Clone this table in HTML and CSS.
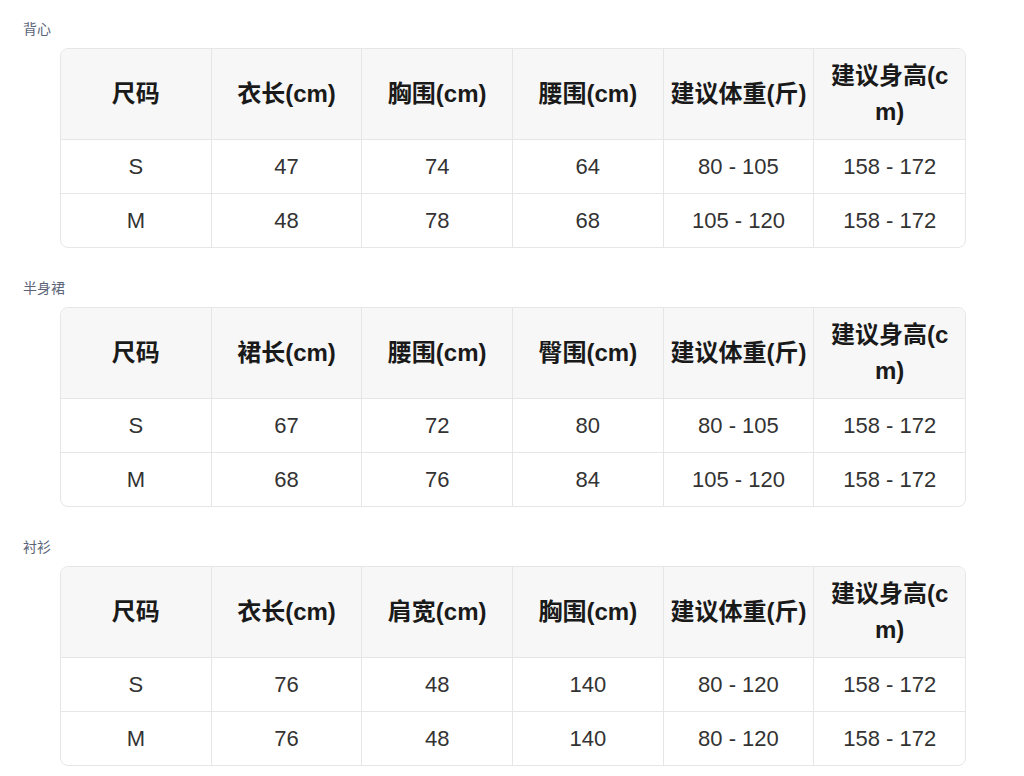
FILE: index.html
```html
<!DOCTYPE html>
<html lang="zh-CN">
<head>
<meta charset="utf-8">
<title>尺码表</title>
<link rel="stylesheet" href="styles.css">
</head>
<body>
<div class="page">
  <section class="size-section">
    <div class="size-label">背心</div>
    <div class="table-wrap">
      <table class="size-table">
        <thead>
          <tr><th>尺码</th><th>衣长(cm)</th><th>胸围(cm)</th><th>腰围(cm)</th><th>建议体重(斤)</th><th>建议身高(cm)</th></tr>
        </thead>
        <tbody>
          <tr><td>S</td><td>47</td><td>74</td><td>64</td><td>80 - 105</td><td>158 - 172</td></tr>
          <tr><td>M</td><td>48</td><td>78</td><td>68</td><td>105 - 120</td><td>158 - 172</td></tr>
        </tbody>
      </table>
    </div>
  </section>
  <section class="size-section">
    <div class="size-label">半身裙</div>
    <div class="table-wrap">
      <table class="size-table">
        <thead>
          <tr><th>尺码</th><th>裙长(cm)</th><th>腰围(cm)</th><th>臀围(cm)</th><th>建议体重(斤)</th><th>建议身高(cm)</th></tr>
        </thead>
        <tbody>
          <tr><td>S</td><td>67</td><td>72</td><td>80</td><td>80 - 105</td><td>158 - 172</td></tr>
          <tr><td>M</td><td>68</td><td>76</td><td>84</td><td>105 - 120</td><td>158 - 172</td></tr>
        </tbody>
      </table>
    </div>
  </section>
  <section class="size-section">
    <div class="size-label">衬衫</div>
    <div class="table-wrap">
      <table class="size-table">
        <thead>
          <tr><th>尺码</th><th>衣长(cm)</th><th>肩宽(cm)</th><th>胸围(cm)</th><th>建议体重(斤)</th><th>建议身高(cm)</th></tr>
        </thead>
        <tbody>
          <tr><td>S</td><td>76</td><td>48</td><td>140</td><td>80 - 120</td><td>158 - 172</td></tr>
          <tr><td>M</td><td>76</td><td>48</td><td>140</td><td>80 - 120</td><td>158 - 172</td></tr>
        </tbody>
      </table>
    </div>
  </section>
</div>
</body>
</html>
```

FILE: styles.css
```css
html, body {
  margin: 0;
  padding: 0;
  background: #ffffff;
}

body {
  font-family: "Liberation Sans", "Noto Sans CJK SC", sans-serif;
  color: #333333;
}

.page {
  padding: 19px 58px 0 23px;
}

.size-section {
  margin-bottom: 30px;
}

.size-label {
  font-size: 14px;
  line-height: 20px;
  color: #5c6478;
  margin-bottom: 9px;
}

.table-wrap {
  margin-left: 37px;
  border: 1px solid #e6e6e6;
  border-radius: 8px;
  overflow: hidden;
}

.size-table {
  width: 100%;
  table-layout: fixed;
  border-collapse: separate;
  border-spacing: 0;
}

.size-table th,
.size-table td {
  text-align: center;
  vertical-align: middle;
  border-right: 1px solid #e6e6e6;
  border-bottom: 1px solid #e6e6e6;
}

.size-table th:last-child,
.size-table td:last-child {
  border-right: none;
}

.size-table tbody tr:last-child td {
  border-bottom: none;
}

.size-table th {
  background: #f7f7f7;
  font-size: 24px;
  line-height: 36px;
  font-weight: bold;
  color: #1a1a1a;
  padding: 9px 5px;
  word-break: break-all;
}

.size-table td {
  font-size: 22px;
  line-height: 33px;
  padding: 10px 5px;
  color: #333333;
}
```
